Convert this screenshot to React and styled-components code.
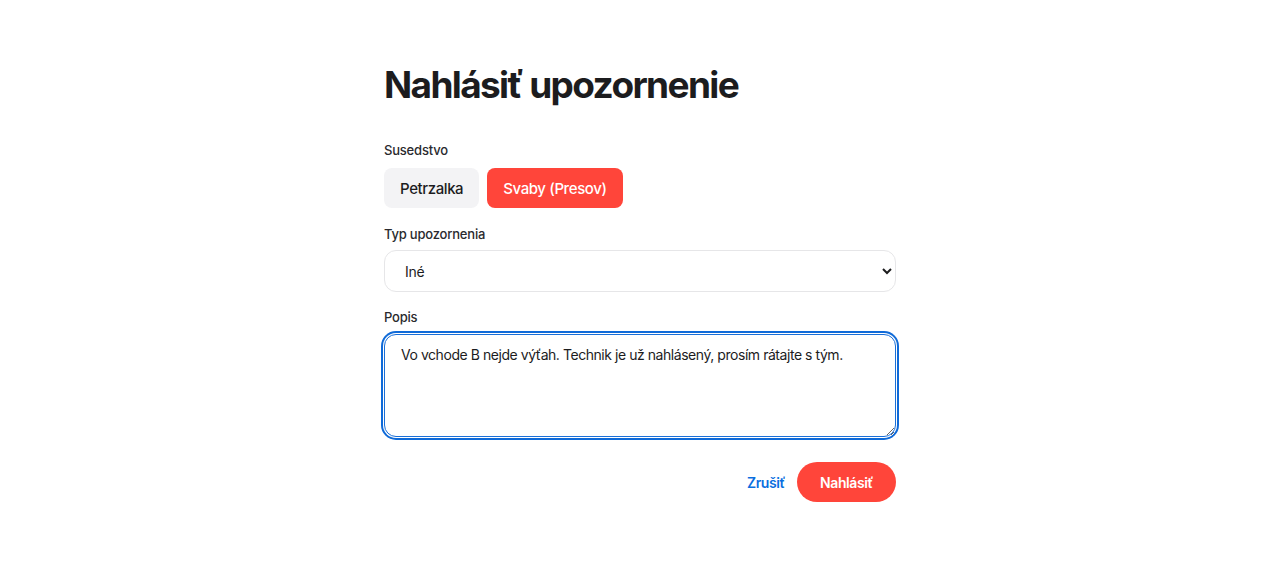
import React, { useState } from "react";
import styled, { createGlobalStyle } from "styled-components";

const GlobalStyle = createGlobalStyle`
  body {
    margin: 0;
    background: #ffffff;
    font-family: Inter, "Noto Sans", sans-serif;
    color: #1c1c1e;
  }
`;

const Page = styled.main`
  display: flex;
  justify-content: center;
  padding-top: 63px;
`;

const Form = styled.form`
  width: 512px;
  display: flex;
  flex-direction: column;
`;

const Title = styled.h1`
  margin: 0 0 35px;
  font-size: 37px;
  line-height: 44px;
  font-weight: 700;
  letter-spacing: -1.65px;
  color: #1c1c1e;
`;

const Label = styled.label`
  display: block;
  font-size: 13px;
  font-weight: 500;
  line-height: 16px;
  letter-spacing: -0.2px;
  color: #2a2a2e;
  margin-bottom: ${p => p.gap || 8}px;
`;

const Field = styled.div`
  margin-bottom: ${p => p.gap || 17}px;
`;

const Pills = styled.div`
  display: flex;
  gap: 8px;
`;

const Pill = styled.button`
  height: 40px;
  padding: 0 16px;
  border: none;
  border-radius: 8px;
  font-family: inherit;
  font-size: 15px;
  font-weight: 500;
  letter-spacing: -0.4px;
  cursor: pointer;
  background: ${p => (p.active ? "#ff453a" : "#f3f3f5")};
  color: ${p => (p.active ? "#ffffff" : "#1c1c1e")};
`;

const Select = styled.select`
  display: block;
  width: 100%;
  height: 42px;
  padding: 0 6px 0 16px;
  border: 1px solid #e6e6e8;
  border-radius: 12px;
  background: #ffffff;
  font-family: inherit;
  font-size: 14px;
  letter-spacing: -0.3px;
  color: #1c1c1e;
  outline: none;
`;

const TextArea = styled.textarea`
  display: block;
  width: 100%;
  height: 103px;
  box-sizing: border-box;
  padding: 10px 16px;
  border: 1px solid #1a6fd8;
  border-radius: 12px;
  box-shadow: 0 0 0 1px #ffffff, 0 0 0 3px #0f6ad8;
  font-family: inherit;
  font-size: 14px;
  line-height: 20px;
  letter-spacing: -0.45px;
  color: #1c1c1e;
  resize: vertical;
  outline: none;
`;

const Actions = styled.div`
  display: flex;
  justify-content: flex-end;
  align-items: center;
  gap: 12px;
`;

const LinkButton = styled.button`
  border: none;
  background: none;
  padding: 0;
  font-family: inherit;
  font-size: 14px;
  font-weight: 600;
  letter-spacing: -0.4px;
  color: #0a6ee0;
  cursor: pointer;
`;

const Submit = styled.button`
  height: 40px;
  padding: 0 23px;
  border: none;
  border-radius: 20px;
  background: #ff453a;
  color: #ffffff;
  font-family: inherit;
  font-size: 14px;
  font-weight: 600;
  letter-spacing: -0.4px;
  cursor: pointer;
`;

const areas = ["Petrzalka", "Svaby (Presov)"];

export default function App() {
  const [area, setArea] = useState("Svaby (Presov)");
  const [type, setType] = useState("ine");
  const [text, setText] = useState(
    "Vo vchode B nejde výťah. Technik je už nahlásený, prosím rátajte s tým."
  );

  return (
    <Page>
      <GlobalStyle />
      <Form onSubmit={e => e.preventDefault()}>
        <Title>Nahlásiť upozornenie</Title>
        <Field gap={18}>
          <Label gap={10}>Susedstvo</Label>
          <Pills>
            {areas.map(a => (
              <Pill
                key={a}
                type="button"
                active={a === area}
                onClick={() => setArea(a)}
              >
                {a}
              </Pill>
            ))}
          </Pills>
        </Field>
        <Field>
          <Label>Typ upozornenia</Label>
          <Select value={type} onChange={e => setType(e.target.value)}>
            <option value="voda">Voda</option>
            <option value="elektrina">Elektrina</option>
            <option value="ine">Iné</option>
          </Select>
        </Field>
        <Field gap={25}>
          <Label gap={9}>Popis</Label>
          <TextArea value={text} onChange={e => setText(e.target.value)} />
        </Field>
        <Actions>
          <LinkButton type="button">Zrušiť</LinkButton>
          <Submit type="submit">Nahlásiť</Submit>
        </Actions>
      </Form>
    </Page>
  );
}
